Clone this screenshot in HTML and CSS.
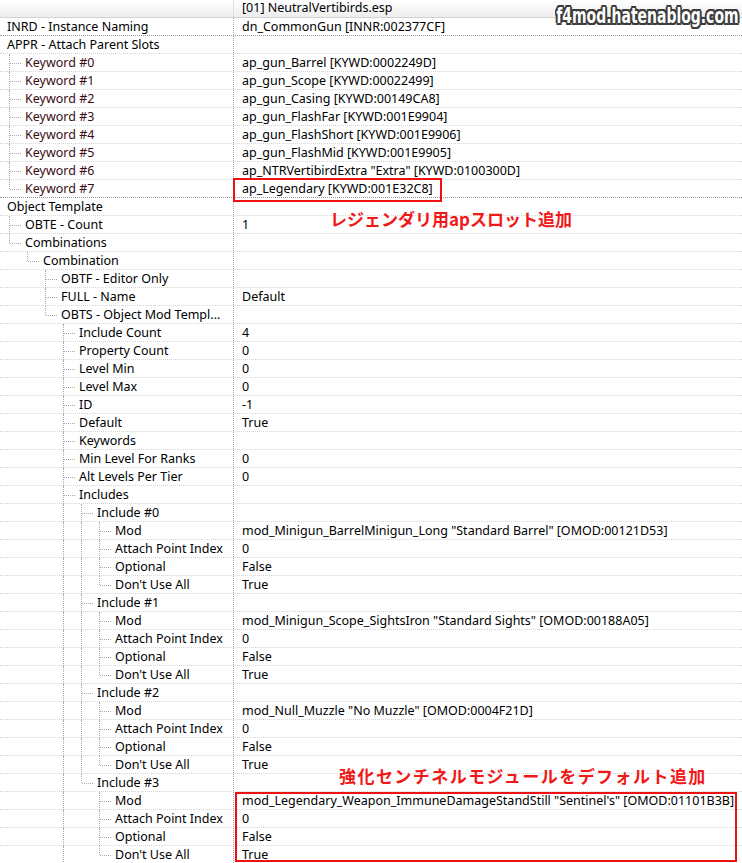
FILE: index.html
```html
<!DOCTYPE html>
<html lang="ja">
<head>
<meta charset="utf-8">
<title>xEdit view</title>
<link rel="stylesheet" href="styles.css">
</head>
<body>
<div class="tree">
  <div class="header"><div class="name"></div><div class="val">[01] NeutralVertibirds.esp</div></div>

  <div class="row sep"><div class="name"><span class="label">INRD - Instance Naming</span></div><div class="val">dn_CommonGun [INNR:002377CF]</div></div>
  <div class="row"><div class="name"><span class="label">APPR - Attach Parent Slots</span></div><div class="val"></div></div>
  <div class="row"><div class="name"><i class="g c"></i><span class="label kw">Keyword #0</span></div><div class="val">ap_gun_Barrel [KYWD:0002249D]</div></div>
  <div class="row"><div class="name"><i class="g c"></i><span class="label kw">Keyword #1</span></div><div class="val">ap_gun_Scope [KYWD:00022499]</div></div>
  <div class="row"><div class="name"><i class="g c"></i><span class="label kw">Keyword #2</span></div><div class="val">ap_gun_Casing [KYWD:00149CA8]</div></div>
  <div class="row"><div class="name"><i class="g c"></i><span class="label kw">Keyword #3</span></div><div class="val">ap_gun_FlashFar [KYWD:001E9904]</div></div>
  <div class="row"><div class="name"><i class="g c"></i><span class="label kw">Keyword #4</span></div><div class="val">ap_gun_FlashShort [KYWD:001E9906]</div></div>
  <div class="row"><div class="name"><i class="g c"></i><span class="label kw">Keyword #5</span></div><div class="val">ap_gun_FlashMid [KYWD:001E9905]</div></div>
  <div class="row"><div class="name"><i class="g c"></i><span class="label kw">Keyword #6</span></div><div class="val">ap_NTRVertibirdExtra "Extra" [KYWD:0100300D]</div></div>
  <div class="row sep"><div class="name"><i class="g c l"></i><span class="label kw">Keyword #7</span></div><div class="val">ap_Legendary [KYWD:001E32C8]</div></div>

  <div class="row"><div class="name"><span class="label">Object Template</span></div><div class="val"></div></div>
  <div class="row"><div class="name"><i class="g c"></i><span class="label">OBTE - Count</span></div><div class="val">1</div></div>
  <div class="row"><div class="name"><i class="g c l"></i><span class="label">Combinations</span></div><div class="val"></div></div>
  <div class="row"><div class="name"><i class="g"></i><i class="g c l"></i><span class="label">Combination</span></div><div class="val"></div></div>
  <div class="row"><div class="name"><i class="g"></i><i class="g"></i><i class="g c"></i><span class="label">OBTF - Editor Only</span></div><div class="val"></div></div>
  <div class="row"><div class="name"><i class="g"></i><i class="g"></i><i class="g c"></i><span class="label">FULL - Name</span></div><div class="val">Default</div></div>
  <div class="row"><div class="name"><i class="g"></i><i class="g"></i><i class="g c l"></i><span class="label">OBTS - Object Mod Templ...</span></div><div class="val"></div></div>

  <div class="row"><div class="name"><i class="g"></i><i class="g"></i><i class="g"></i><i class="g c"></i><span class="label">Include Count</span></div><div class="val">4</div></div>
  <div class="row"><div class="name"><i class="g"></i><i class="g"></i><i class="g"></i><i class="g c"></i><span class="label">Property Count</span></div><div class="val">0</div></div>
  <div class="row"><div class="name"><i class="g"></i><i class="g"></i><i class="g"></i><i class="g c"></i><span class="label">Level Min</span></div><div class="val">0</div></div>
  <div class="row"><div class="name"><i class="g"></i><i class="g"></i><i class="g"></i><i class="g c"></i><span class="label">Level Max</span></div><div class="val">0</div></div>
  <div class="row"><div class="name"><i class="g"></i><i class="g"></i><i class="g"></i><i class="g c"></i><span class="label">ID</span></div><div class="val">-1</div></div>
  <div class="row"><div class="name"><i class="g"></i><i class="g"></i><i class="g"></i><i class="g c"></i><span class="label">Default</span></div><div class="val">True</div></div>
  <div class="row"><div class="name"><i class="g"></i><i class="g"></i><i class="g"></i><i class="g c"></i><span class="label">Keywords</span></div><div class="val"></div></div>
  <div class="row"><div class="name"><i class="g"></i><i class="g"></i><i class="g"></i><i class="g c"></i><span class="label">Min Level For Ranks</span></div><div class="val">0</div></div>
  <div class="row"><div class="name"><i class="g"></i><i class="g"></i><i class="g"></i><i class="g c"></i><span class="label">Alt Levels Per Tier</span></div><div class="val">0</div></div>
  <div class="row"><div class="name"><i class="g"></i><i class="g"></i><i class="g"></i><i class="g c"></i><span class="label">Includes</span></div><div class="val"></div></div>

  <div class="row"><div class="name"><i class="g"></i><i class="g"></i><i class="g"></i><i class="g v"></i><i class="g c"></i><span class="label">Include #0</span></div><div class="val"></div></div>
  <div class="row"><div class="name"><i class="g"></i><i class="g"></i><i class="g"></i><i class="g v"></i><i class="g v"></i><i class="g c"></i><span class="label">Mod</span></div><div class="val">mod_Minigun_BarrelMinigun_Long "Standard Barrel" [OMOD:00121D53]</div></div>
  <div class="row"><div class="name"><i class="g"></i><i class="g"></i><i class="g"></i><i class="g v"></i><i class="g v"></i><i class="g c"></i><span class="label">Attach Point Index</span></div><div class="val">0</div></div>
  <div class="row"><div class="name"><i class="g"></i><i class="g"></i><i class="g"></i><i class="g v"></i><i class="g v"></i><i class="g c"></i><span class="label">Optional</span></div><div class="val">False</div></div>
  <div class="row"><div class="name"><i class="g"></i><i class="g"></i><i class="g"></i><i class="g v"></i><i class="g v"></i><i class="g c l"></i><span class="label">Don't Use All</span></div><div class="val">True</div></div>

  <div class="row"><div class="name"><i class="g"></i><i class="g"></i><i class="g"></i><i class="g v"></i><i class="g c"></i><span class="label">Include #1</span></div><div class="val"></div></div>
  <div class="row"><div class="name"><i class="g"></i><i class="g"></i><i class="g"></i><i class="g v"></i><i class="g v"></i><i class="g c"></i><span class="label">Mod</span></div><div class="val">mod_Minigun_Scope_SightsIron "Standard Sights" [OMOD:00188A05]</div></div>
  <div class="row"><div class="name"><i class="g"></i><i class="g"></i><i class="g"></i><i class="g v"></i><i class="g v"></i><i class="g c"></i><span class="label">Attach Point Index</span></div><div class="val">0</div></div>
  <div class="row"><div class="name"><i class="g"></i><i class="g"></i><i class="g"></i><i class="g v"></i><i class="g v"></i><i class="g c"></i><span class="label">Optional</span></div><div class="val">False</div></div>
  <div class="row"><div class="name"><i class="g"></i><i class="g"></i><i class="g"></i><i class="g v"></i><i class="g v"></i><i class="g c l"></i><span class="label">Don't Use All</span></div><div class="val">True</div></div>

  <div class="row"><div class="name"><i class="g"></i><i class="g"></i><i class="g"></i><i class="g v"></i><i class="g c"></i><span class="label">Include #2</span></div><div class="val"></div></div>
  <div class="row"><div class="name"><i class="g"></i><i class="g"></i><i class="g"></i><i class="g v"></i><i class="g v"></i><i class="g c"></i><span class="label">Mod</span></div><div class="val">mod_Null_Muzzle "No Muzzle" [OMOD:0004F21D]</div></div>
  <div class="row"><div class="name"><i class="g"></i><i class="g"></i><i class="g"></i><i class="g v"></i><i class="g v"></i><i class="g c"></i><span class="label">Attach Point Index</span></div><div class="val">0</div></div>
  <div class="row"><div class="name"><i class="g"></i><i class="g"></i><i class="g"></i><i class="g v"></i><i class="g v"></i><i class="g c"></i><span class="label">Optional</span></div><div class="val">False</div></div>
  <div class="row"><div class="name"><i class="g"></i><i class="g"></i><i class="g"></i><i class="g v"></i><i class="g v"></i><i class="g c l"></i><span class="label">Don't Use All</span></div><div class="val">True</div></div>

  <div class="row"><div class="name"><i class="g"></i><i class="g"></i><i class="g"></i><i class="g v"></i><i class="g c l"></i><span class="label">Include #3</span></div><div class="val"></div></div>
  <div class="row"><div class="name"><i class="g"></i><i class="g"></i><i class="g"></i><i class="g v"></i><i class="g"></i><i class="g c"></i><span class="label">Mod</span></div><div class="val">mod_Legendary_Weapon_ImmuneDamageStandStill "Sentinel's" [OMOD:01101B3B]</div></div>
  <div class="row"><div class="name"><i class="g"></i><i class="g"></i><i class="g"></i><i class="g v"></i><i class="g"></i><i class="g c"></i><span class="label">Attach Point Index</span></div><div class="val">0</div></div>
  <div class="row"><div class="name"><i class="g"></i><i class="g"></i><i class="g"></i><i class="g v"></i><i class="g"></i><i class="g c"></i><span class="label">Optional</span></div><div class="val">False</div></div>
  <div class="row"><div class="name"><i class="g"></i><i class="g"></i><i class="g"></i><i class="g v"></i><i class="g"></i><i class="g c l"></i><span class="label">Don't Use All</span></div><div class="val">True</div></div>
</div>

<div class="watermark"><span>f4mod.hatenablog.com</span></div>
<div class="hl hl-one"></div>
<div class="hl hl-two"></div>
<div class="note note-one">レジェンダリ用apスロット追加</div>
<div class="note note-two">強化センチネルモジュールをデフォルト追加</div>
</body>
</html>
```

FILE: styles.css
```css
html, body {
  margin: 0;
  padding: 0;
}
body {
  width: 742px;
  height: 863px;
  overflow: hidden;
  position: relative;
  background: #fff;
  color: #000;
  font-family: "Noto Sans", "Liberation Sans", sans-serif;
  font-size: 12.5px;
}
.tree {
  display: flex;
  flex-direction: column;
}
.header {
  display: flex;
  height: 17px;
  border-bottom: 1px solid #d2d2d2;
  background: linear-gradient(#ffffff, #eeeeee);
}
.header .name {
  border-right: 1px solid #dedede;
}
.header .val {
  line-height: 16px;
}
.row {
  display: flex;
  height: 17px;
  border-bottom: 1px dotted #d6d6d6;
}
.row.sep {
  border-bottom-color: #9a9a9a;
}
.name {
  width: 233px;
  flex: none;
  display: flex;
  border-right: 1px dotted #a8a8a8;
}
.val {
  padding-left: 8px;
  white-space: nowrap;
  line-height: 17px;
}
.label {
  padding-left: 7px;
  white-space: nowrap;
  line-height: 17px;
}
.label.kw {
  color: #3a0c12;
}
.g {
  width: 18px;
  flex: none;
  position: relative;
}
.g.v::before,
.g.c::before {
  content: "";
  position: absolute;
  left: 9px;
  top: 0;
  bottom: -1px;
  border-left: 1px dotted #aaaaaa;
}
.g.c.l::before {
  bottom: auto;
  height: 9px;
}
.g.c::after {
  content: "";
  position: absolute;
  left: 10px;
  top: 9px;
  width: 11px;
  border-top: 1px dotted #aaaaaa;
}

.watermark {
  position: absolute;
  left: 555px;
  top: 2px;
  width: 187px;
  height: 27px;
  overflow: hidden;
  white-space: nowrap;
}
.watermark span {
  display: inline-block;
  padding-left: 2px;
  font-family: "DejaVu Sans", sans-serif;
  font-weight: bold;
  font-size: 22px;
  line-height: 27px;
  color: #fff;
  transform: scaleX(0.635);
  transform-origin: left center;
  text-shadow:
    2px 0 0 #3c3c3c, -2px 0 0 #3c3c3c, 0 2px 0 #3c3c3c, 0 -2px 0 #3c3c3c,
    2px 2px 0 #3c3c3c, -2px -2px 0 #3c3c3c, 2px -2px 0 #3c3c3c, -2px 2px 0 #3c3c3c,
    1px 2px 0 #3c3c3c, -1px 2px 0 #3c3c3c, 1px -2px 0 #3c3c3c, -1px -2px 0 #3c3c3c,
    3px 0 0 #3c3c3c, -3px 0 0 #3c3c3c;
}

.hl {
  position: absolute;
  box-sizing: border-box;
  border: 2px solid #ee1111;
}
.hl-one {
  left: 233px;
  top: 178px;
  width: 209px;
  height: 24px;
}
.hl-two {
  left: 235px;
  top: 792px;
  width: 502px;
  height: 70px;
}
.note {
  position: absolute;
  color: #f01818;
  font-family: "Noto Sans CJK JP", "Noto Sans", sans-serif;
  font-weight: 700;
  font-size: 17px;
  line-height: 20px;
  white-space: nowrap;
}
.note-one {
  left: 330px;
  top: 209px;
}
.note-two {
  left: 339px;
  top: 766px;
  letter-spacing: 1.45px;
}
```
